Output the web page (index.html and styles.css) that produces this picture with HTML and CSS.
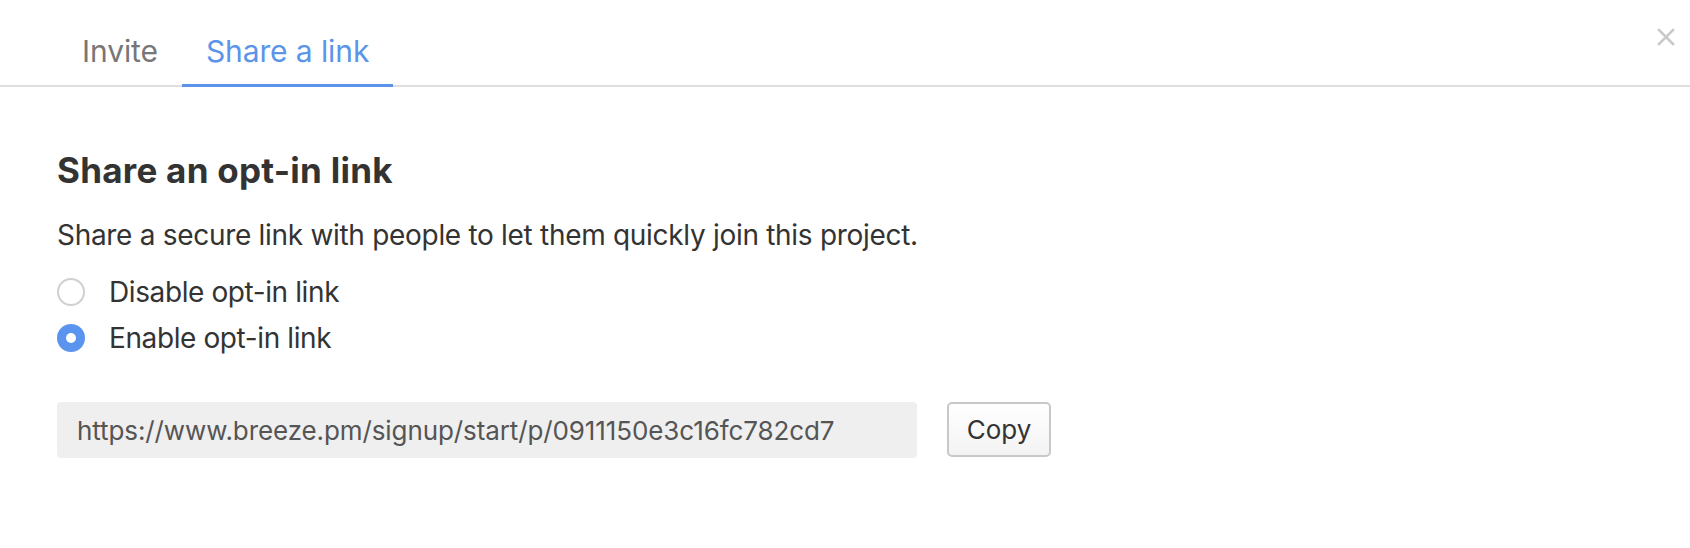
FILE: index.html
```html
<!DOCTYPE html>
<html lang="en">
<head>
<meta charset="utf-8">
<title>Share a link</title>
<link rel="stylesheet" href="styles.css">
</head>
<body>
<div class="modal">
  <div class="header">
    <nav class="tabs">
      <a class="tab">Invite</a>
      <a class="tab active">Share a link</a>
    </nav>
    <button class="close" aria-label="Close">
      <svg width="18" height="18" viewBox="0 0 18 18"><path d="M2 2 L16 16 M16 2 L2 16" stroke="#c9c9c9" stroke-width="2.6" stroke-linecap="square" fill="none"/></svg>
    </button>
  </div>
  <div class="content">
    <h2 class="title">Share an opt-in link</h2>
    <p class="desc">Share a secure link with people to let them quickly join this project.</p>
    <div class="options">
      <label class="option"><span class="radio"></span><span>Disable opt-in link</span></label>
      <label class="option"><span class="radio checked"></span><span>Enable opt-in link</span></label>
    </div>
    <div class="link-row">
      <div class="link-field">https://www.breeze.pm/signup/start/p/0911150e3c16fc782cd7</div>
      <button class="copy">Copy</button>
    </div>
  </div>
</div>
</body>
</html>
```

FILE: styles.css
```css
* { box-sizing: border-box; }
html, body { margin: 0; padding: 0; background: #fff; }
body {
  font-family: Inter, "Liberation Sans", Arial, sans-serif;
  color: #333;
  width: 1690px;
  height: 548px;
  overflow: hidden;
}
.header {
  display: flex;
  align-items: flex-start;
  border-bottom: 2px solid #dedede;
  height: 87px;
}
.tabs {
  display: flex;
  padding-left: 58px;
}
.tab {
  font-size: 30px;
  line-height: 36px;
  padding: 33px 24px 15px;
  color: #777;
  border-bottom: 3px solid transparent;
  height: 87px;
  letter-spacing: -0.1px;
}
.tab.active {
  color: #5b94e8;
  border-bottom-color: #5b94e8;
}
.close {
  margin-left: auto;
  margin-top: 28px;
  margin-right: 15px;
  width: 18px;
  height: 18px;
  padding: 0;
  border: 0;
  background: none;
  display: flex;
}
.content {
  padding: 62px 0 0 57px;
}
.title {
  margin: 0;
  font-size: 35px;
  line-height: 42px;
  font-weight: 700;
  color: #333;
  letter-spacing: 0.25px;
}
.desc {
  margin: 26px 0 0;
  font-size: 28px;
  line-height: 36px;
  letter-spacing: -0.3px;
}
.options {
  margin-top: 21px;
  display: flex;
  flex-direction: column;
  gap: 10px;
}
.option {
  display: flex;
  align-items: center;
  gap: 24px;
  font-size: 28px;
  line-height: 36px;
  letter-spacing: -0.4px;
}
.radio {
  width: 28px;
  height: 28px;
  border-radius: 50%;
  border: 2px solid #d0d0d0;
  background: #fff;
  display: flex;
  align-items: center;
  justify-content: center;
  flex: none;
}
.radio.checked {
  border-color: #5b94ee;
  background: #5b94ee;
}
.radio.checked::after {
  content: "";
  width: 10px;
  height: 10px;
  border-radius: 50%;
  background: #fff;
}
.link-row {
  margin-top: 46px;
  display: flex;
  align-items: flex-start;
  gap: 30px;
}
.link-field {
  width: 860px;
  height: 56px;
  background: #efefef;
  border-radius: 4px;
  padding-left: 20px;
  display: flex;
  align-items: center;
  font-size: 26px;
  color: #555;
  letter-spacing: -0.1px;
}
.copy {
  width: 104px;
  height: 55px;
  border: 2px solid #c8c8c8;
  border-radius: 5px;
  background: linear-gradient(#ffffff, #f3f3f3);
  font-family: inherit;
  font-size: 26px;
  color: #333;
  padding: 0;
}
```
